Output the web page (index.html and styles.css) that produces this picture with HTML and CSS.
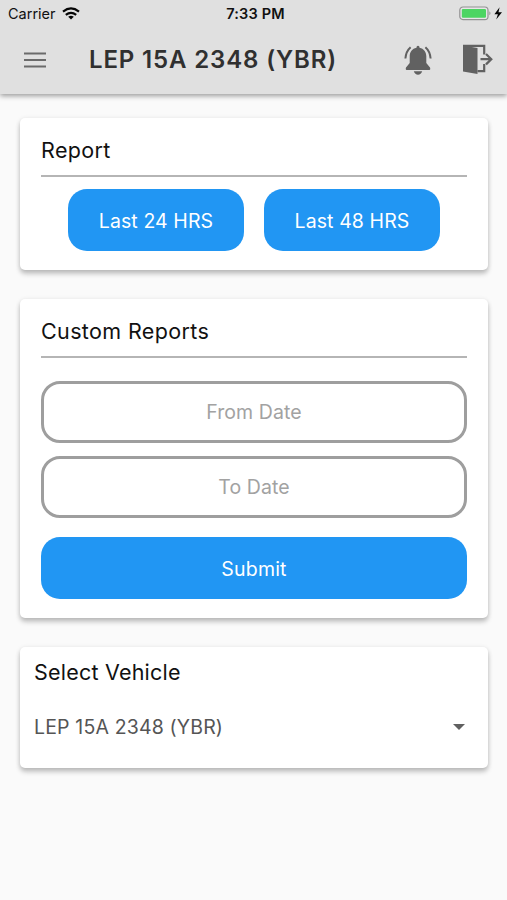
FILE: index.html
```html
<!DOCTYPE html>
<html lang="en">
<head>
<meta charset="utf-8">
<title>LEP 15A 2348 (YBR)</title>
<link rel="stylesheet" href="styles.css">
</head>
<body>
<header class="header">
  <div class="status">
    <div class="carrier"><span>Carrier</span>
      <svg width="18" height="13" viewBox="0 0 18 13" fill="none" stroke="#050505" stroke-width="2.2"><path d="M1 4.600Q9-1.800 17 4.600M3.800 7.800Q9 3.800 14.200 7.800"/><path d="M6.200 9.800Q9 7.800 11.800 9.800L9 12.600Z" fill="#050505" stroke="none"/></svg>
    </div>
    <span class="time">7:33 PM</span>
    <div class="power">
      <svg width="44" height="16" viewBox="0 0 44 16"><rect x=".8" y="1" width="28.200" height="12.600" rx="3.200" fill="#e8e6e8" stroke="#929292" stroke-width="1.200"/><rect x="2.800" y="2.900" width="24.200" height="8.800" rx="1.200" fill="#4cd562"/><path d="M30.400 5.200Q32.600 7.200 30.400 9.300Z" fill="#929292"/><path d="M40.600 1.200 35.400 8.200H38.900L37.200 13.600 43 6.300H39.500Z" fill="#050505"/></svg>
    </div>
  </div>
  <div class="toolbar">
    <svg class="menu" width="22" height="16" viewBox="0 0 22 16"><path d="M0 1.500H22M0 8H22M0 14.500H22" stroke="#6a6a6a" stroke-width="2.200"/></svg>
    <h1 class="title">LEP 15A 2348 (YBR)</h1>
    <svg class="bell" width="28" height="30" viewBox="0 0 28 30" fill="#616161"><path d="M14 .8C15 .8 15.500 1.500 15.500 2.800 19.800 3.700 22.300 7 22.300 11.300V18L26 22.400Q27 25 24.500 25H3.500Q1 25 2 22.400L5.700 18V11.300C5.700 7 8.200 3.700 12.500 2.800 12.500 1.500 13 .8 14 .8Z"/><path d="M9.800 26.300H18.200Q17 29.700 14 29.700T9.800 26.300Z"/><path d="M6.600 2.300Q2 6.300 1.400 13.500M21.400 2.300Q26 6.300 26.600 13.500" fill="none" stroke="#616161" stroke-width="2"/></svg>
    <svg class="exit" width="31" height="31" viewBox="0 0 31 31"><path d="M1 1.500 15.500 4V30L1 27.600Z" fill="#616161"/><path d="M1 1.900H22.200V10.500M22.200 20V27.200H15.500" fill="none" stroke="#616161" stroke-width="2.200"/><path d="M18.500 15.200H29M24 10 29.300 15.200 24 20.400" fill="none" stroke="#616161" stroke-width="2.200"/></svg>
  </div>
</header>
<main class="content">
  <section class="card report">
    <h2 class="heading">Report</h2>
    <div class="quick">
      <button class="button">Last 24 HRS</button>
      <button class="button">Last 48 HRS</button>
    </div>
  </section>
  <section class="card custom">
    <h2 class="heading">Custom Reports</h2>
    <div class="fields">
      <div class="field">From Date</div>
      <div class="field">To Date</div>
    </div>
    <button class="button submit">Submit</button>
  </section>
  <section class="card vehicle">
    <h2 class="vehicle-heading">Select Vehicle</h2>
    <div class="select"><span>LEP 15A 2348 (YBR)</span>
      <svg width="12" height="6" viewBox="0 0 12 6"><path d="M0 0H12L6 6Z" fill="#606060"/></svg>
    </div>
  </section>
</main>
</body>
</html>
```
FILE: styles.css
```css
* { box-sizing: border-box; }
body {
  margin: 0;
  min-height: 900px;
  background: #fafafa;
  font-family: Inter, "Liberation Sans", sans-serif;
  color: #111;
}
h1, h2 { margin: 0; font-weight: 400; }
svg { display: block; flex: none; }
.header {
  height: 94px;
  background: #e0e0e0;
  box-shadow: 0 2px 5px rgba(0, 0, 0, .38);
}
.status {
  display: grid;
  grid-template-columns: 1fr auto 1fr;
  align-items: center;
  height: 27px;
  padding: 0 4px 0 8px;
}
.carrier { display: flex; align-items: center; gap: 6px; font-size: 14.5px; }
.time { font-size: 14.5px; font-weight: 600; letter-spacing: .2px; }
.power { justify-self: end; }
.toolbar { display: flex; align-items: center; height: 65px; padding: 0 14px 0 24px; }
.title {
  flex: 1;
  margin-left: 43px;
  font-size: 24px;
  font-weight: 600;
  letter-spacing: .86px;
  color: #303030;
  white-space: nowrap;
}
.exit { margin-left: 30px; }
.content { display: flex; flex-direction: column; gap: 29px; padding: 24px 19px 0 20px; }
.card {
  background: #fff;
  border-radius: 5px;
  box-shadow: 0 4px 5px rgba(0, 0, 0, .2), 0 1px 5px rgba(0, 0, 0, .12);
}
.report, .custom { padding: 0 21px; }
.report { height: 152px; }
.custom { height: 319px; }
.heading {
  height: 59px;
  border-bottom: 2px solid #b5b5b5;
  font-size: 21.5px;
  line-height: 64px;
  letter-spacing: .36px;
}
.quick { display: flex; justify-content: center; gap: 20px; margin-top: 12px; }
.button {
  width: 176px;
  height: 62px;
  padding: 1px 0 0;
  border: 0;
  border-radius: 19px;
  background: #2196f3;
  color: #fff;
  font: 400 19.5px Inter, "Liberation Sans", sans-serif;
  letter-spacing: .1px;
}
.fields { display: grid; gap: 13px; margin-top: 23px; }
.field {
  display: flex;
  align-items: center;
  justify-content: center;
  height: 62px;
  border: 3px solid #9e9e9e;
  border-radius: 19px;
  font-size: 19.5px;
  letter-spacing: .08px;
  color: #a2a2a2;
}
.submit { width: 100%; margin-top: 19px; letter-spacing: .2px; }
.vehicle { height: 121px; padding: 0 23px 0 14px; }
.vehicle-heading { font-size: 21.5px; line-height: 51px; letter-spacing: .22px; }
.select {
  display: flex;
  align-items: center;
  justify-content: space-between;
  height: 58px;
  font-size: 19.5px;
  letter-spacing: .16px;
  color: #555;
}
```
